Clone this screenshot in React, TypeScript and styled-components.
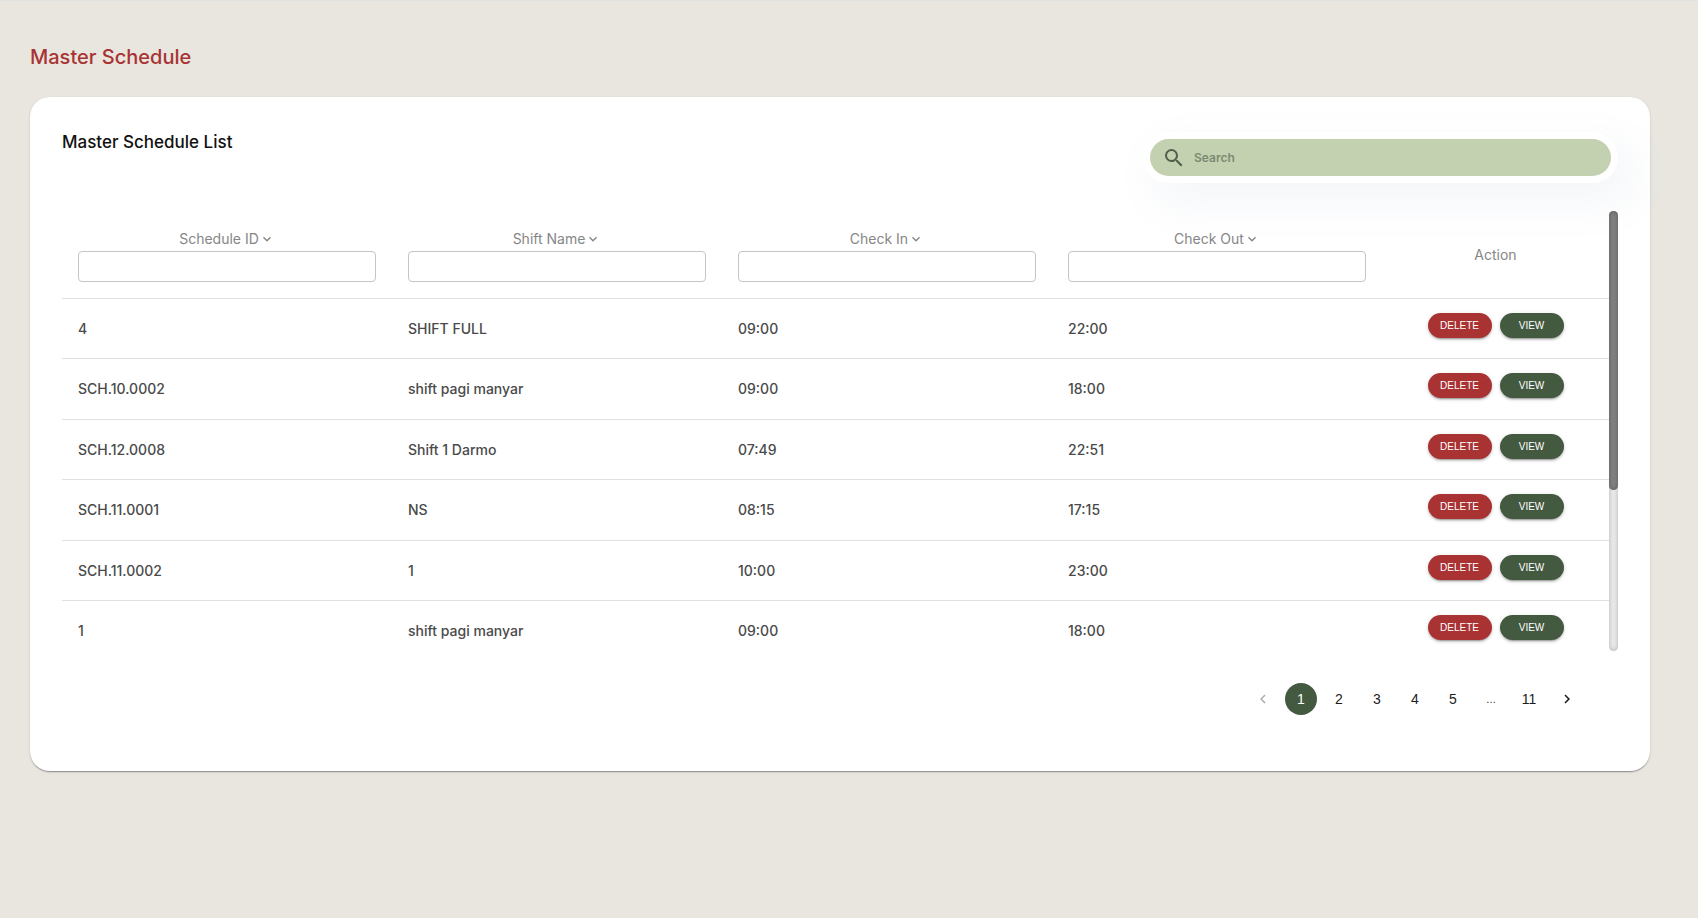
import React from "react";
import styled, { createGlobalStyle } from "styled-components";
import {
  MdChevronLeft,
  MdChevronRight,
  MdExpandMore,
  MdSearch,
} from "react-icons/md";

const colors = {
  page: "#e8e6df",
  red: "#a93333",
  green: "#435940",
  sage: "#c4d1b0",
  line: "#e0e0e0",
};

const GlobalStyle = createGlobalStyle`
  *, *::before, *::after { box-sizing: border-box; }
  body {
    margin: 0;
    background: ${colors.page};
    font-family: Inter, "Liberation Sans", sans-serif;
    font-size: 14px;
  }
  button, input { font-family: inherit; }
`;

const Page = styled.main`
  min-height: 100vh;
  padding: 40px 48px 48px 30px;
  border-top: 1px solid #e0e3df;
`;

const PageTitle = styled.h1`
  margin: 0 0 24px;
  color: ${colors.red};
  font-size: 20px;
  font-weight: 500;
  line-height: 32px;
`;

const Card = styled.section`
  padding: 35px 32px 56px;
  background: #fff;
  border-radius: 20px;
  box-shadow: 0 2px 1px -1px rgba(0, 0, 0, 0.2),
    0 1px 1px 0 rgba(0, 0, 0, 0.14), 0 1px 3px 0 rgba(0, 0, 0, 0.12);
`;

const CardHeader = styled.header`
  display: flex;
  justify-content: space-between;
  align-items: flex-start;
  margin-bottom: 28px;
`;

const CardTitle = styled.h2`
  margin: 0;
  color: #111;
  font-size: 17px;
  font-weight: 500;
  line-height: 20px;
`;

const SearchFrame = styled.div`
  width: 475px;
  max-width: 60%;
  padding: 7px;
  background: #fff;
  border-radius: 30px;
  box-shadow: 14px 17px 40px 4px rgba(112, 144, 176, 0.08);
`;

const SearchBar = styled.label`
  display: flex;
  align-items: center;
  gap: 8px;
  height: 37px;
  padding: 0 12px;
  color: #4f6049;
  background: ${colors.sage};
  border-radius: 30px;
`;

const SearchInput = styled.input`
  flex: 1;
  min-width: 0;
  padding: 0;
  border: 0;
  outline: 0;
  background: transparent;
  color: ${colors.green};
  font-size: 12px;
  font-weight: 600;

  &::placeholder {
    color: #7b8a72;
    opacity: 1;
  }
`;

const TableArea = styled.div`
  display: flex;
  height: 440px;
  background: #fff;
`;

const TableViewport = styled.div`
  flex: 1;
  min-width: 0;
  overflow-y: auto;
  scrollbar-width: none;
`;

const ScrollTrack = styled.div`
  width: 9px;
  background: #ebebeb;
  border-radius: 10px;
  box-shadow: inset 0 0 5px rgba(0, 0, 0, 0.25);
`;

const ScrollThumb = styled.div`
  height: 279px;
  background: #808080;
  border-radius: 10px;
  box-shadow: inset 0 0 4px rgba(0, 0, 0, 0.3);
`;

const Table = styled.table`
  width: 100%;
  table-layout: fixed;
  border-collapse: separate;
  border-spacing: 0;
`;

const ActionCol = styled.col`
  width: 227px;
`;

const HeadCell = styled.th`
  height: 88px;
  padding: 0 16px;
  border-bottom: 1px solid ${colors.line};
  color: #868686;
  font-weight: 400;
  line-height: 24px;
  text-align: center;
`;

const HeadLabel = styled.label`
  display: flex;
  justify-content: center;
  align-items: center;
`;

const FilterInput = styled.input`
  display: block;
  width: 100%;
  height: 31px;
  padding: 4px 8px;
  border: 1px solid #c4c4c4;
  border-radius: 4px;
  background: #fff;
  font-size: 14px;
`;

const Row = styled.tr`
  height: 60px;

  &:nth-child(even) {
    height: 61px;
  }

  &:last-child > td {
    border-bottom-color: transparent;
  }
`;

const Cell = styled.td`
  padding: 0 16px;
  border-bottom: 1px solid ${colors.line};
  color: #4a4a4a;
  font-weight: 500;
  line-height: 20px;
`;

const ActionCell = styled(Cell)`
  vertical-align: top;
`;

const Actions = styled.div`
  display: flex;
  justify-content: center;
  gap: 8px;
  padding-top: 14px;
`;

const ActionButton = styled.button<{ $tone: "red" | "green" }>`
  width: 64px;
  height: 25px;
  padding: 0;
  border: 0;
  border-radius: 13px;
  background: ${({ $tone }) => colors[$tone]};
  color: #fff;
  font-family: "Liberation Sans", Arial, sans-serif;
  font-size: 10px;
  font-weight: 500;
  line-height: 24px;
  cursor: pointer;
  box-shadow: 0 3px 1px -2px rgba(0, 0, 0, 0.2),
    0 2px 2px 0 rgba(0, 0, 0, 0.14), 0 1px 5px 0 rgba(0, 0, 0, 0.12);
`;

const Pagination = styled.nav`
  display: flex;
  justify-content: flex-end;
  gap: 6px;
  margin-top: 32px;
  padding-right: 35px;
`;

const PageButton = styled.button<{ $current?: boolean }>`
  display: flex;
  justify-content: center;
  align-items: center;
  width: 32px;
  height: 32px;
  padding: 0 0 1px;
  border: 0;
  border-radius: 50%;
  background: ${({ $current }) => ($current ? colors.green : "transparent")};
  color: ${({ $current }) => ($current ? "#fff" : "#1c1c1c")};
  font-family: "Liberation Sans", Arial, sans-serif;
  font-size: 14px;
  cursor: pointer;

  &:disabled {
    color: #adadad;
    cursor: default;
  }
`;

const Ellipsis = styled.span`
  width: 32px;
  color: #1c1c1c;
  font-family: "Liberation Sans", Arial, sans-serif;
  font-size: 10px;
  line-height: 34px;
  height: 32px;
  text-align: center;
`;

const filters = [
  { id: "schedule-id", label: "Schedule ID" },
  { id: "shift-name", label: "Shift Name" },
  { id: "check-in", label: "Check In" },
  { id: "check-out", label: "Check Out" },
];

const schedules = [
  ["4", "SHIFT FULL", "09:00", "22:00"],
  ["SCH.10.0002", "shift pagi manyar", "09:00", "18:00"],
  ["SCH.12.0008", "Shift 1 Darmo", "07:49", "22:51"],
  ["SCH.11.0001", "NS", "08:15", "17:15"],
  ["SCH.11.0002", "1", "10:00", "23:00"],
  ["1", "shift pagi manyar", "09:00", "18:00"],
];

const pages = [1, 2, 3, 4, 5];

export default function App() {
  return (
    <>
      <GlobalStyle />
      <Page>
        <PageTitle>Master Schedule</PageTitle>
        <Card>
          <CardHeader>
            <CardTitle>Master Schedule List</CardTitle>
            <SearchFrame>
              <SearchBar>
                <MdSearch size={24} aria-hidden />
                <SearchInput type="text" placeholder="Search" aria-label="Search" />
              </SearchBar>
            </SearchFrame>
          </CardHeader>

          <TableArea>
            <TableViewport>
              <Table>
                <colgroup>
                  {filters.map((f) => (
                    <col key={f.id} />
                  ))}
                  <ActionCol />
                </colgroup>
                <thead>
                  <tr>
                    {filters.map((f) => (
                      <HeadCell key={f.id} scope="col">
                        <HeadLabel htmlFor={f.id}>
                          {f.label}
                          <MdExpandMore size={16} aria-hidden />
                        </HeadLabel>
                        <FilterInput id={f.id} type="text" />
                      </HeadCell>
                    ))}
                    <HeadCell scope="col">Action</HeadCell>
                  </tr>
                </thead>
                <tbody>
                  {schedules.map((schedule, i) => (
                    <Row key={i}>
                      {schedule.map((value, j) => (
                        <Cell key={j}>{value}</Cell>
                      ))}
                      <ActionCell>
                        <Actions>
                          <ActionButton type="button" $tone="red">
                            DELETE
                          </ActionButton>
                          <ActionButton type="button" $tone="green">
                            VIEW
                          </ActionButton>
                        </Actions>
                      </ActionCell>
                    </Row>
                  ))}
                </tbody>
              </Table>
            </TableViewport>
            <ScrollTrack aria-hidden>
              <ScrollThumb />
            </ScrollTrack>
          </TableArea>

          <Pagination aria-label="Pages">
            <PageButton type="button" disabled aria-label="Previous page">
              <MdChevronLeft size={18} />
            </PageButton>
            {pages.map((n) => (
              <PageButton
                key={n}
                type="button"
                $current={n === 1}
                aria-current={n === 1 ? "page" : undefined}
              >
                {n}
              </PageButton>
            ))}
            <Ellipsis>…</Ellipsis>
            <PageButton type="button">11</PageButton>
            <PageButton type="button" aria-label="Next page">
              <MdChevronRight size={18} />
            </PageButton>
          </Pagination>
        </Card>
      </Page>
    </>
  );
}
